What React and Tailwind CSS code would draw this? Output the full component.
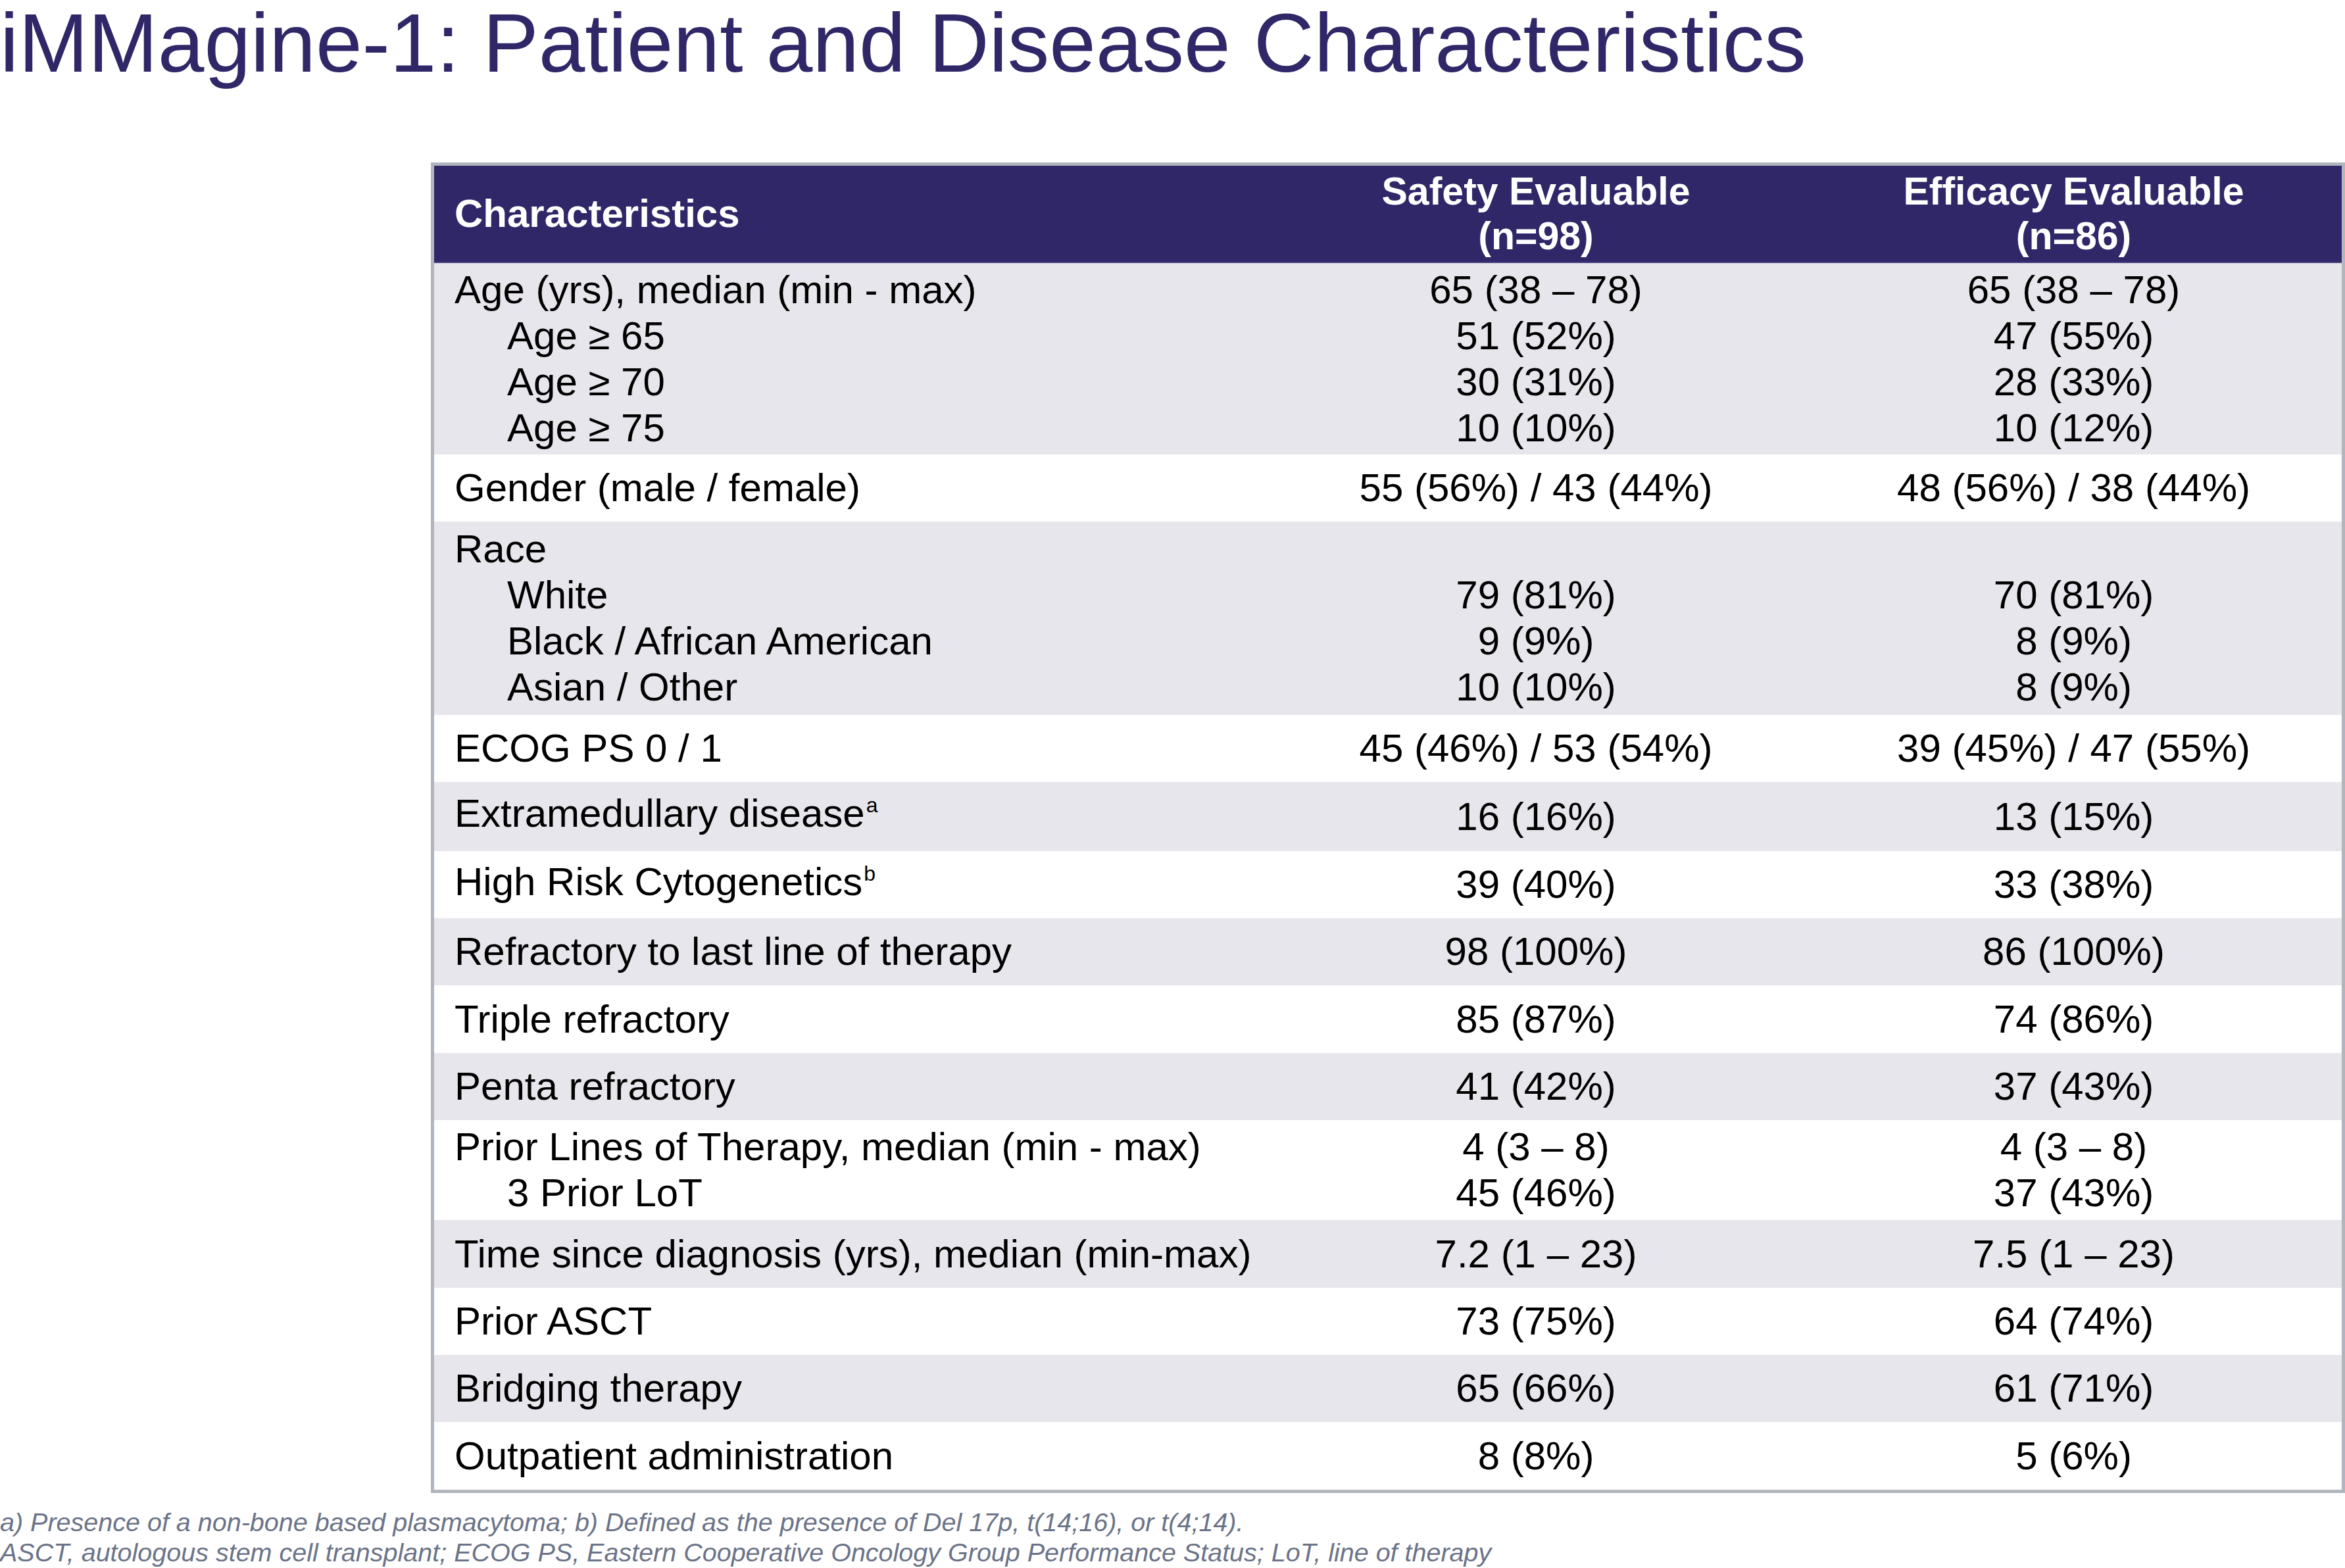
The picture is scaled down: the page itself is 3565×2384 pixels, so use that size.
const rows = [
  {
    h: "h-[291px]",
    bg: "bg-[#e7e6ec]",
    lines: [
      ["Age (yrs), median (min - max)", "65 (38 – 78)", "65 (38 – 78)"],
      ["Age ≥ 65", "51 (52%)", "47 (55%)", true],
      ["Age ≥ 70", "30 (31%)", "28 (33%)", true],
      ["Age ≥ 75", "10 (10%)", "10 (12%)", true],
    ],
  },
  {
    h: "h-[102px]",
    bg: "bg-white",
    lines: [["Gender (male / female)", "55 (56%) / 43 (44%)", "48 (56%) / 38 (44%)"]],
  },
  {
    h: "h-[294px]",
    bg: "bg-[#e7e6ec]",
    lines: [
      ["Race", "", ""],
      ["White", "79 (81%)", "70 (81%)", true],
      ["Black / African American", "9 (9%)", "8 (9%)", true],
      ["Asian / Other", "10 (10%)", "8 (9%)", true],
    ],
  },
  {
    h: "h-[102px]",
    bg: "bg-white",
    lines: [["ECOG PS 0 / 1", "45 (46%) / 53 (54%)", "39 (45%) / 47 (55%)"]],
  },
  {
    h: "h-[105px]",
    bg: "bg-[#e7e6ec]",
    lines: [["Extramedullary disease", "16 (16%)", "13 (15%)"]],
    sup: "a",
  },
  {
    h: "h-[102px]",
    bg: "bg-white",
    lines: [["High Risk Cytogenetics", "39 (40%)", "33 (38%)"]],
    sup: "b",
  },
  {
    h: "h-[102px]",
    bg: "bg-[#e7e6ec]",
    lines: [["Refractory to last line of therapy", "98 (100%)", "86 (100%)"]],
  },
  {
    h: "h-[103px]",
    bg: "bg-white",
    lines: [["Triple refractory", "85 (87%)", "74 (86%)"]],
  },
  {
    h: "h-[102px]",
    bg: "bg-[#e7e6ec]",
    lines: [["Penta refractory", "41 (42%)", "37 (43%)"]],
  },
  {
    h: "h-[152px]",
    bg: "bg-white",
    lines: [
      ["Prior Lines of Therapy, median (min - max)", "4 (3 – 8)", "4 (3 – 8)"],
      ["3 Prior LoT", "45 (46%)", "37 (43%)", true],
    ],
  },
  {
    h: "h-[103px]",
    bg: "bg-[#e7e6ec]",
    lines: [["Time since diagnosis (yrs), median (min-max)", "7.2 (1 – 23)", "7.5 (1 – 23)"]],
  },
  {
    h: "h-[102px]",
    bg: "bg-white",
    lines: [["Prior ASCT", "73 (75%)", "64 (74%)"]],
  },
  {
    h: "h-[102px]",
    bg: "bg-[#e7e6ec]",
    lines: [["Bridging therapy", "65 (66%)", "61 (71%)"]],
  },
  {
    h: "h-[103px]",
    bg: "bg-white",
    lines: [["Outpatient administration", "8 (8%)", "5 (6%)"]],
  },
];

function Row({ row }) {
  return (
    <div className={`${row.h} ${row.bg} grid grid-cols-[1265px_820px_1fr] items-center text-black`}>
      <div className="pl-[31px]">
        {row.lines.map((l, i) => (
          <div key={i} className={l[3] ? "pl-[80px]" : ""}>
            {l[0]}
            {row.sup && (
              <span className="text-[32px] relative -top-[22px] ml-[2px]">{row.sup}</span>
            )}
          </div>
        ))}
      </div>
      <div className="text-center">
        {row.lines.map((l, i) => (
          <div key={i} className="h-[70px]">{l[1]}</div>
        ))}
      </div>
      <div className="text-center">
        {row.lines.map((l, i) => (
          <div key={i} className="h-[70px]">{l[2]}</div>
        ))}
      </div>
    </div>
  );
}

export default function App() {
  return (
    <div className="w-[3565px] h-[2384px] bg-white overflow-hidden font-['Liberation_Sans',Arial,sans-serif]">
      <h1 className="text-[127px] leading-none text-[#2f2768] pt-[2px] whitespace-nowrap">
        iMMagine-1: Patient and Disease Characteristics
      </h1>

      <div className="ml-[655px] mt-[118px] w-[2910px] border-[5px] border-[#b0b5be] text-[60px] leading-[70px]">
        <div className="h-[148px] bg-[#2f2768] text-white font-bold grid grid-cols-[1265px_820px_1fr] items-center leading-[68px] border-b-2 border-[#4a4380]">
          <div className="pl-[31px]">Characteristics</div>
          <div className="text-center text-[59px]">
            Safety Evaluable
            <br />
            (n=98)
          </div>
          <div className="text-center text-[59px]">
            Efficacy Evaluable
            <br />
            (n=86)
          </div>
        </div>
        {rows.map((row, i) => (
          <Row row={row} key={i} />
        ))}
      </div>

      <div className="mt-[21px] text-[39.5px] leading-[46px] italic text-[#6b7388] whitespace-nowrap">
        <p>a) Presence of a non-bone based plasmacytoma; b) Defined as the presence of Del 17p, t(14;16), or t(4;14).</p>
        <p>ASCT, autologous stem cell transplant; ECOG PS, Eastern Cooperative Oncology Group Performance Status; LoT, line of therapy</p>
      </div>
    </div>
  );
}
